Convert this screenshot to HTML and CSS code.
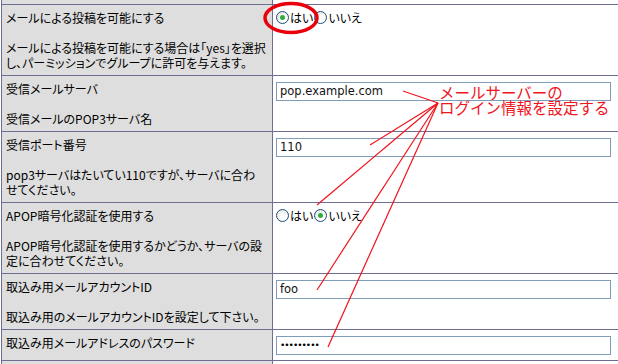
FILE: index.html
```html
<!DOCTYPE html>
<html lang="ja">
<head>
  <meta charset="UTF-8" />
  <title>メール投稿設定</title>
  <link rel="stylesheet" href="styles.css">
</head>
<body>

  <div class="page">
    <table class="prefs">
      <tr class="cut">
        <td class="head"></td>
        <td class="even"></td>
      </tr>
      <tr>
        <td class="head">
          メールによる投稿を可能にする<br><br>
          <span class="desc">メールによる投稿を可能にする場合は「yes」を選択<br>し、パーミッションでグループに許可を与えます。</span>
        </td>
        <td class="even">
          <label class="radio"><span class="dot checked"></span>はい</label><label class="radio"><span class="dot"></span>いいえ</label>
        </td>
      </tr>
      <tr>
        <td class="head">
          受信メールサーバ<br><br>
          <span class="desc">受信メールのPOP3サーバ名</span>
        </td>
        <td class="even"><input type="text" value="pop.example.com"></td>
      </tr>
      <tr>
        <td class="head">
          受信ポート番号<br><br>
          <span class="desc">pop3サーバはたいてい110ですが、サーバに合わ<br>せてください。</span>
        </td>
        <td class="even"><input type="text" value="110"></td>
      </tr>
      <tr>
        <td class="head">
          APOP暗号化認証を使用する<br><br>
          <span class="desc">APOP暗号化認証を使用するかどうか、サーバの設<br>定に合わせてください。</span>
        </td>
        <td class="even">
          <label class="radio"><span class="dot"></span>はい</label><label class="radio"><span class="dot checked"></span>いいえ</label>
        </td>
      </tr>
      <tr>
        <td class="head">
          取込み用メールアカウントID<br><br>
          <span class="desc">取込み用のメールアカウントIDを設定して下さい。</span>
        </td>
        <td class="even"><input type="text" value="foo"></td>
      </tr>
      <tr>
        <td class="head">取込み用メールアドレスのパスワード</td>
        <td class="even"><input class="secret" type="password" value="secretpw1"></td>
      </tr>
      <tr class="cut">
        <td class="head"></td>
        <td class="even"></td>
      </tr>
    </table>

    <!-- annotation drawn over the screenshot -->
    <svg class="marks" width="618" height="364" viewBox="0 0 618 364">
      <ellipse cx="291" cy="18" rx="26" ry="14.5" fill="none" stroke="#e8000b" stroke-width="3.5"/>
      <g stroke="#f0141e" stroke-width="1.2" fill="none">
        <line x1="438" y1="103" x2="403" y2="91"/>
        <line x1="438" y1="103" x2="370" y2="145"/>
        <line x1="438" y1="103" x2="317" y2="205"/>
        <line x1="438" y1="103" x2="317" y2="290"/>
        <line x1="438" y1="103" x2="328" y2="347"/>
      </g>
    </svg>
    <div class="note">メールサーバーの<br>ログイン情報を設定する</div>
  </div>

</body>
</html>
```

FILE: styles.css
```css
* {
  box-sizing: border-box;
}

body {
  margin: 0;
  background: #ffffff;
  font-family: "Noto Sans CJK JP", "DejaVu Sans", sans-serif;
  overflow: hidden;
}

.page {
  position: relative;
  width: 618px;
  height: 364px;
  overflow: hidden;
}

.prefs {
  border-collapse: collapse;
  margin: -1px 0 0 1px;
  width: 660px;
  font-size: 12px;
  line-height: 15px;
  font-feature-settings: "palt";
  color: #000;
}

.prefs td {
  border: 1px solid #6e6e92;
  padding: 5px 3px 5px 4px;
  vertical-align: top;
}

.prefs td.head {
  width: 271px;
  background: #dedede;
}

.prefs td.even {
  background: #ffffff;
  padding-left: 3px;
}

.prefs tr.cut td {
  height: 5px;
  padding: 0;
  border-top: none;
}

.prefs tr:last-child td {
  height: 6px;
  border-bottom: none;
}

input {
  display: block;
  width: 335px;
  height: 19px;
  margin: 1px 0 0 0;
  padding: 0 3px;
  border: 1px solid #7f9db9;
  font-family: "DejaVu Sans", sans-serif;
  font-size: 11.5px;
  color: #111;
  background: #fff;
}

input.secret {
  font-size: 9px;
  letter-spacing: -1px;
  color: #000;
}

.radio {
  display: inline-flex;
  align-items: center;
  margin-right: 1px;
}

.dot {
  display: inline-block;
  position: relative;
  width: 13px;
  height: 13px;
  margin-right: 1px;
  border: 1px solid #1c5180;
  border-radius: 50%;
  background: radial-gradient(circle at 60% 65%, #ffffff 30%, #d8d8d0 100%);
}

.dot.checked::after {
  content: "";
  position: absolute;
  left: 3px;
  top: 3px;
  width: 5px;
  height: 5px;
  border-radius: 50%;
  background: #2fae3a;
}

.marks {
  position: absolute;
  left: 0;
  top: 0;
  pointer-events: none;
}

.note {
  position: absolute;
  left: 439px;
  top: 85px;
  font-size: 15.5px;
  line-height: 15px;
  color: #f0141e;
  white-space: nowrap;
}
```
